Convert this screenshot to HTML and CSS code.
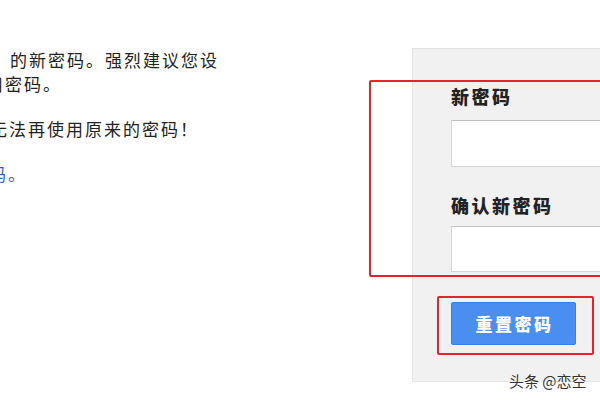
FILE: index.html
```html
<!DOCTYPE html>
<html lang="zh-CN">
<head>
<meta charset="utf-8">
<title>重置密码</title>
<link rel="stylesheet" href="styles.css">
</head>
<body>
<div class="page">
  <div class="intro">
    <p class="para">
      <span class="line l1">的新密码。强烈建议您设</span>
      <span class="line l2">用密码。</span>
    </p>
    <p class="para">
      <span class="line l3">无法再使用原来的密码！</span>
    </p>
    <p class="para">
      <a class="line l4 link" href="#">码。</a>
    </p>
  </div>
  <div class="panel">
    <label class="label">新密码</label>
    <input class="field" type="password">
    <label class="label label2">确认新密码</label>
    <input class="field field2" type="password">
    <button class="btn" type="button">重置密码</button>
  </div>
  <div class="mark mark-fields"></div>
  <div class="mark mark-btn"></div>
  <div class="watermark">头条 @恋空</div>
</div>
</body>
</html>
```
FILE: styles.css
```css
html, body {
  margin: 0;
  padding: 0;
  background: #ffffff;
}
body {
  font-family: "Noto Sans CJK SC", "Noto Sans", sans-serif;
  color: #222222;
}
.page {
  position: relative;
  display: flex;
  width: 600px;
  height: 400px;
  overflow: hidden;
}
.intro {
  width: 412px;
  flex: none;
  overflow: hidden;
  padding-top: 48px;
  box-sizing: border-box;
}
.para {
  margin: 0 0 21px 0;
  font-size: 17px;
  line-height: 24px;
  letter-spacing: 2px;
}
.line {
  display: block;
  white-space: nowrap;
}
.l1 { text-indent: 10px; }
.l2 { text-indent: -14px; }
.l3 { text-indent: -10px; }
.l4 { text-indent: -11px; }
.link {
  color: #2b5fc4;
  text-decoration: none;
}
.panel {
  flex: 1;
  display: flex;
  flex-direction: column;
  align-items: flex-start;
  margin-top: 48px;
  height: 334px;
  box-sizing: border-box;
  background: #f1f1f1;
  border: 1px solid #e4e4e4;
  border-right: none;
  padding: 37px 0 0 38px;
}
.label {
  display: block;
  font-size: 18px;
  line-height: 20px;
  font-weight: 900;
  letter-spacing: 2.5px;
  color: #222222;
}
.label2 {
  margin-top: 28px;
}
.field {
  margin-top: 14px;
  width: 200px;
  height: 47px;
  box-sizing: border-box;
  background: #ffffff;
  border: 1px solid #d6d6d6;
  border-top-color: #c2c2c2;
  padding: 0;
  flex: none;
}
.field2 {
  margin-top: 11px;
  height: 46px;
}
.btn {
  margin-top: 30px;
  width: 125px;
  height: 43px;
  background: #4b8ef2;
  border: 1px solid #3b7de6;
  border-radius: 2px;
  color: #ffffff;
  font-family: "Noto Sans CJK SC", sans-serif;
  font-size: 17px;
  font-weight: 900;
  letter-spacing: 2.5px;
  padding: 0 0 0 2px;
}
.mark {
  position: absolute;
  border: 2px solid #e8242a;
  border-radius: 2px;
  box-sizing: border-box;
}
.mark-fields {
  left: 369px;
  top: 80px;
  width: 260px;
  height: 197px;
}
.mark-btn {
  left: 437px;
  top: 296px;
  width: 157px;
  height: 59px;
}
.watermark {
  position: absolute;
  left: 509px;
  top: 371px;
  font-size: 15px;
  line-height: 20px;
  color: #333333;
  text-shadow: 0 0 2px #ffffff;
  white-space: nowrap;
}
```
